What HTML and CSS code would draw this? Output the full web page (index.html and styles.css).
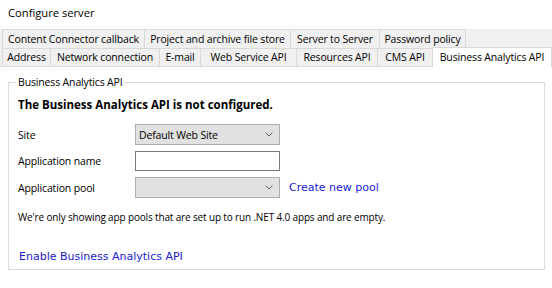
FILE: index.html
```html
<!DOCTYPE html>
<html lang="en">
<head>
  <meta charset="UTF-8">
  <meta name="viewport" content="width=device-width, initial-scale=1.0">
  <title>Configure server</title>
  <link rel="stylesheet" href="styles.css">
</head>
<body>

  <div class="title">Configure server</div>

  <div class="tabs">
    <div class="tab-row back">
      <span class="tab">Content Connector callback</span>
      <span class="tab">Project and archive file store</span>
      <span class="tab">Server to Server</span>
      <span class="tab">Password policy</span>
    </div>
    <div class="tab-row front">
      <span class="tab">Address</span>
      <span class="tab">Network connection</span>
      <span class="tab">E-mail</span>
      <span class="tab">Web Service API</span>
      <span class="tab">Resources API</span>
      <span class="tab">CMS API</span>
      <span class="tab active">Business Analytics API</span>
    </div>
  </div>

  <div class="page">
    <div class="group">
      <span class="group-title">Business Analytics API</span>

      <p class="status">The Business Analytics API is not configured.</p>

      <div class="form">
        <label>Site</label>
        <div class="select">
          <span>Default Web Site</span>
          <svg class="chevron" width="8" height="5" viewBox="0 0 8 5"><polyline points="0.5,0.5 4,4 7.5,0.5" /></svg>
        </div>

        <label>Application name</label>
        <div class="textbox"></div>

        <label>Application pool</label>
        <div class="pool">
          <div class="select">
            <span></span>
            <svg class="chevron" width="8" height="5" viewBox="0 0 8 5"><polyline points="0.5,0.5 4,4 7.5,0.5" /></svg>
          </div>
          <a href="#" class="link">Create new pool</a>
        </div>
      </div>

      <p class="note">We're only showing app pools that are set up to run .NET 4.0 apps and are empty.</p>

      <a href="#" class="link enable">Enable Business Analytics API</a>
    </div>
  </div>

</body>
</html>
```

FILE: styles.css
```css
body {
  font-family: 'Open Sans', sans-serif;
  font-size: 10.5px;
  letter-spacing: -0.15px;
  color: #000;
  background-color: #fff;
  margin: 0;
}

.title {
  height: 29px;
  line-height: 26px;
  padding-left: 8px;
  font-size: 11.2px;
  letter-spacing: 0;
}

/* tab strip */

.tabs {
  background-color: #f0f0f0;
  padding-left: 2px;
}

.tab-row {
  display: flex;
  height: 19px;
}

.tab-row.front {
  height: 18px;
}

.tab {
  box-sizing: border-box;
  flex: none;
  border: 1px solid #d9d9d9;
  border-bottom: none;
  margin-right: -1px;
  line-height: 18px;
  text-align: center;
  white-space: nowrap;
}

.front .tab {
  line-height: 17px;
}

.back .tab:nth-child(1) { width: 143px; }
.back .tab:nth-child(2) { width: 147px; }
.back .tab:nth-child(3) { width: 90px; }
.back .tab:nth-child(4) { width: 87px; }

.front .tab:nth-child(1) { width: 49px; }
.front .tab:nth-child(2) { width: 110px; }
.front .tab:nth-child(3) { width: 42px; }
.front .tab:nth-child(4) { width: 97px; }
.front .tab:nth-child(5) { width: 82px; }
.front .tab:nth-child(6) { width: 56px; }

.tab.active {
  width: 120px;
  background-color: #fff;
  position: relative;
  z-index: 1;
  margin-top: -1px;
  height: 20px;
  line-height: 18px;
}

/* tab page */

.page {
  border-top: 1px solid #d9d9d9;
  padding: 15px 0 0 8px;
}

.group {
  position: relative;
  width: 537px;
  box-sizing: border-box;
  padding: 14px 0 5px 9px;
  border: 1px solid #dcdcdc;
}

.group-title {
  position: absolute;
  left: 7px;
  top: -8px;
  padding: 0 2px;
  line-height: 14px;
  background-color: #fff;
}

.status {
  margin: 0;
  font-size: 11.5px;
  font-weight: 700;
  letter-spacing: 0;
  line-height: 16px;
}

.form {
  display: grid;
  grid-template-columns: 117px auto;
  grid-template-rows: 21px 20px 21px;
  row-gap: 6px;
  align-items: center;
  margin-top: 11px;
}

.select {
  width: 145px;
  height: 21px;
  box-sizing: border-box;
  background-color: #e1e1e1;
  border: 1px solid #adadad;
  display: flex;
  align-items: center;
  justify-content: space-between;
  padding: 0 6px 0 3px;
}

.chevron {
  fill: none;
  stroke: #606060;
  stroke-width: 1;
}

.textbox {
  width: 145px;
  height: 20px;
  box-sizing: border-box;
  background-color: #fff;
  border: 1px solid #7a7a7a;
}

.pool {
  display: flex;
  align-items: center;
  gap: 9px;
}

.link {
  font-family: 'DejaVu Sans', sans-serif;
  font-size: 11px;
  letter-spacing: 0;
  color: #1a1ad0;
  text-decoration: none;
  line-height: 14px;
}

.note {
  margin: 12px 0 0;
  font-size: 10px;
  line-height: 14px;
}

.enable {
  display: block;
  margin-top: 26px;
  padding-left: 1px;
}
```
